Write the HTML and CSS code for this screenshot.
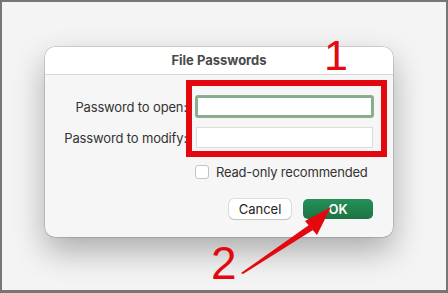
FILE: index.html
```html
<!DOCTYPE html>
<html lang="en">
<head>
    <meta charset="UTF-8">
    <meta name="viewport" content="width=device-width, initial-scale=1.0">
    <title>File Passwords</title>
    <link rel="stylesheet" href="styles.css">
</head>
<body>
<div class="frame">
    <div class="dialog">
        <div class="dialog-title">File Passwords</div>
        <div class="dialog-body">
            <div class="fields">
                <label class="field-label" for="pwOpen">Password to open:</label>
                <input class="field-input focused" id="pwOpen" type="password">
                <label class="field-label" for="pwModify">Password to modify:</label>
                <input class="field-input" id="pwModify" type="password">
                <span></span>
                <label class="check-row">
                    <span class="check-box"></span>
                    Read-only recommended
                </label>
            </div>
            <div class="buttons">
                <button class="btn btn-cancel">Cancel</button>
                <button class="btn btn-ok">OK</button>
            </div>
        </div>
    </div>

    <!-- пометки поверх скриншота -->
    <div class="mark-box"></div>
    <div class="mark-num num-1">1</div>
    <div class="mark-num num-2">2</div>
    <svg class="mark-arrow" width="448" height="293" viewBox="0 0 448 293">
        <polygon points="241,273 243,274 313,230 309,225" fill="#e3080f"/>
        <polygon points="331,207 305,221 317,235" fill="#e3080f"/>
    </svg>
</div>
</body>
</html>
```

FILE: styles.css
```css
/* Основные стили */
body {
    margin: 0;
    font-family: Inter, "Noto Sans", sans-serif;
}

.frame {
    position: relative;
    width: 448px;
    height: 293px;
    box-sizing: border-box;
    border: 2px solid #767676;
    border-bottom-width: 3px;
    background-color: #f4f4f4;
    padding: 45px 0 0 43px;
    overflow: hidden;
}

.dialog {
    width: 348px;
    height: 190px;
    box-sizing: border-box;
    background-color: #f6f6f6;
    border-radius: 10px;
    box-shadow: 0 0 0 0.5px rgba(0, 0, 0, 0.25), 0 14px 32px rgba(0, 0, 0, 0.3);
    overflow: hidden;
}

.dialog-title {
    height: 27px;
    line-height: 27px;
    background-color: #fff;
    border-bottom: 1px solid #dadada;
    text-align: center;
    font-size: 13px;
    font-weight: 700;
    color: #4a4a4a;
}

.dialog-body {
    padding: 21px 20px 0 10px;
}

.fields {
    display: grid;
    grid-template-columns: 1fr 177px;
    column-gap: 8px;
    row-gap: 10px;
    align-items: center;
}

.field-label {
    text-align: right;
    font-size: 13px;
    letter-spacing: -0.15px;
    color: #333;
    margin-right: 1px;
}

.field-input {
    height: 21px;
    box-sizing: border-box;
    margin: 0;
    border: 1px solid #dcdcdc;
    background-color: #fff;
    outline: none;
}

.field-input.focused {
    border: 2px solid #88ad8d;
    border-radius: 2px;
    box-shadow: 0 0 0 1px #8db292;
}

.check-row {
    display: flex;
    align-items: center;
    gap: 7px;
    margin: 6px 0 0 -1px;
    font-size: 13px;
    letter-spacing: -0.2px;
    color: #333;
}

.check-box {
    width: 14px;
    height: 14px;
    box-sizing: border-box;
    border: 1px solid #c4c4c4;
    border-radius: 3px;
    background-color: #fff;
}

.buttons {
    display: flex;
    justify-content: flex-end;
    gap: 12px;
    margin-top: 19px;
}

.btn {
    height: 20px;
    padding: 0;
    border: none;
    border-radius: 5px;
    font-family: Inter, "Noto Sans", sans-serif;
    font-size: 13px;
}

.btn-cancel {
    width: 62px;
    background-color: #fff;
    color: #222;
    box-shadow: 0 0 0 0.5px rgba(0, 0, 0, 0.2), 0 1px 1px rgba(0, 0, 0, 0.12);
}

.btn-ok {
    width: 70px;
    background: linear-gradient(#279058, #1b7444);
    color: #fff;
    font-weight: 600;
}

/* Пометки */
.mark-box {
    position: absolute;
    left: 184px;
    top: 78px;
    width: 201px;
    height: 77px;
    box-sizing: border-box;
    border: 6px solid #e3080f;
}

.mark-num {
    position: absolute;
    font-family: "Liberation Sans", Arial, sans-serif;
    line-height: 1;
    color: #e3080f;
}

.num-1 {
    left: 322px;
    top: 32px;
    font-size: 43px;
}

.num-2 {
    left: 209px;
    top: 238px;
    font-size: 46px;
}

.mark-arrow {
    position: absolute;
    left: -2px;
    top: -2px;
}
```
